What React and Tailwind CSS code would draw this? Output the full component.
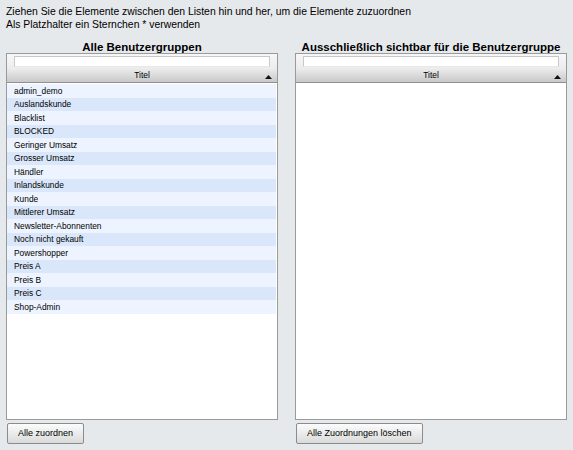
import React from 'react'

const GROUPS = [
  'admin_demo',
  'Auslandskunde',
  'Blacklist',
  'BLOCKED',
  'Geringer Umsatz',
  'Grosser Umsatz',
  'Händler',
  'Inlandskunde',
  'Kunde',
  'Mittlerer Umsatz',
  'Newsletter-Abonnenten',
  'Noch nicht gekauft',
  'Powershopper',
  'Preis A',
  'Preis B',
  'Preis C',
  'Shop-Admin',
]

function SortArrow() {
  return (
    <svg width="7" height="4" viewBox="0 0 7 4" className="absolute right-[5px] top-[6px]">
      <path d="M0 4 L3.5 0 L7 4 Z" fill="#111" />
    </svg>
  )
}

function Panel({ title, items, button }) {
  return (
    <div className="flex flex-col w-[272px]">
      <div className="h-[17px] flex items-end justify-center text-[11.5px] font-bold text-black leading-none">
        {title}
      </div>
      <div className="h-[367px] border border-[#9a9a9a] bg-white flex flex-col overflow-hidden">
        <div className="h-[15px] bg-gradient-to-b from-[#f7f7f7] to-[#ececec] px-[7px] pt-[2px]">
          <div className="h-[11px] bg-white border border-[#c8c8c8] border-b-[#e8e8e8]" />
        </div>
        <div className="relative h-[14px] bg-gradient-to-b from-[#ebebeb] to-[#c9c9c9] border-b border-[#8f8f8f] flex items-center justify-center text-[8.4px] text-black leading-none">
          Titel
          <SortArrow />
        </div>
        <div className="flex flex-col pt-[1px] pr-[1px]">
          {items.map((g, i) => (
            <div
              key={g}
              className={`h-[13.5px] pl-[7px] flex items-center text-[8.4px] leading-none text-black ${i % 2 === 0 ? 'bg-[#edf4ff]' : 'bg-[#dae7fa]'}`}
            >
              {g}
            </div>
          ))}
        </div>
      </div>
      <div className="mt-[3px] flex">
        <button className="ml-[1px] h-[21px] px-[10px] border border-[#8c8c8c] rounded-[2px] bg-gradient-to-b from-[#fcfcfc] to-[#dadada] text-[9px] text-black leading-none">
          {button}
        </button>
      </div>
    </div>
  )
}

export default function App() {
  return (
    <div className="w-[573px] h-[450px] bg-[#e6e9ec] px-[6px] pt-[5px] overflow-hidden" style={{ fontFamily: '"Liberation Sans", Arial, sans-serif' }}>
      <div className="text-[10.4px] leading-[13px] text-black">
        <div>Ziehen Sie die Elemente zwischen den Listen hin und her, um die Elemente zuzuordnen</div>
        <div>Als Platzhalter ein Sternchen * verwenden</div>
      </div>
      <div className="flex gap-[17px] mt-[5px]">
        <Panel title="Alle Benutzergruppen" items={GROUPS} button="Alle zuordnen" />
        <Panel title="Ausschließlich sichtbar für die Benutzergruppe" items={[]} button="Alle Zuordnungen löschen" />
      </div>
    </div>
  )
}
